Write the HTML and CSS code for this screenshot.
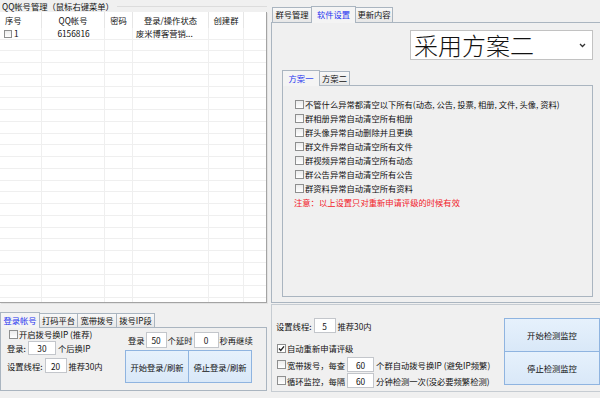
FILE: index.html
```html
<!DOCTYPE html>
<html lang="zh-CN">
<head>
    <meta charset="UTF-8">
    <title>QQ群管理</title>
    <link rel="stylesheet" href="styles.css">
</head>
<body>
<div class="app">
    <!-- 左侧：帐号列表 + 登录设置 -->
    <div class="left">
        <div class="group-title"><span>QQ帐号管理（鼠标右键菜单）</span></div>
        <div class="list">
            <div class="list-head">
                <div class="col first">序号</div>
                <div class="col">QQ帐号</div>
                <div class="col">密码</div>
                <div class="col">登录/操作状态</div>
                <div class="col">创建群</div>
                <div class="col last"></div>
            </div>
            <div class="list-body">
                <div class="row">
                    <div class="col first"><span class="cb small"></span>1</div>
                    <div class="col">6156816</div>
                    <div class="col"></div>
                    <div class="col lefty">废米博客营销...</div>
                    <div class="col"></div>
                    <div class="col"></div>
                </div>
            </div>
        </div>

        <div class="tabs bottom-tabs">
            <div class="tab on" style="width:40px">登录帐号</div>
            <div class="tab" style="width:39px">打码平台</div>
            <div class="tab" style="width:40px">宽带拨号</div>
            <div class="tab" style="width:39px">拨号IP段</div>
        </div>
        <div class="panel login-panel">
            <div class="login-left">
                <div class="line l1"><span class="cb"></span>开启拨号换IP (推荐)</div>
                <div class="line l2">登录:<span class="inp" style="width:28px">30</span>个后换IP</div>
                <div class="line l3">设置线程:<span class="inp" style="width:22px">20</span>推荐30内</div>
            </div>
            <div class="login-right">
                <div class="line delay">登录<span class="inp" style="width:21px">50</span>个延时<span class="inp" style="width:25px">0</span>秒再继续</div>
                <div class="btns">
                    <div class="btn">开始登录/刷新</div>
                    <div class="btn">停止登录/刷新</div>
                </div>
            </div>
        </div>
    </div>

    <!-- 右侧：软件设置 -->
    <div class="right">
        <div class="tabs top-tabs">
            <div class="tab" style="width:40px">群号管理</div>
            <div class="tab on" style="width:45px">软件设置</div>
            <div class="tab" style="width:38px">更新内容</div>
        </div>
        <div class="panel main-panel">
            <div class="select">
                <span>采用方案二</span>
                <svg width="7" height="5" viewBox="0 0 7 5"><path d="M1 1 L3.5 3.5 L6 1" fill="none" stroke="#333" stroke-width="1.3"/></svg>
            </div>
            <div class="tabs inner-tabs">
                <div class="tab on" style="width:38px">方案一</div>
                <div class="tab" style="width:31px">方案二</div>
            </div>
            <div class="panel inner-panel">
                <div class="opt"><span class="cb"></span>不管什么异常都清空以下所有(动态, 公告, 投票, 相册, 文件, 头像, 资料)</div>
                <div class="opt"><span class="cb"></span>群相册异常自动清空所有相册</div>
                <div class="opt"><span class="cb"></span>群头像异常自动删除并且更换</div>
                <div class="opt"><span class="cb"></span>群文件异常自动清空所有文件</div>
                <div class="opt"><span class="cb"></span>群视频异常自动清空所有动态</div>
                <div class="opt"><span class="cb"></span>群公告异常自动清空所有公告</div>
                <div class="opt"><span class="cb"></span>群资料异常自动清空所有资料</div>
                <div class="opt note">注意：以上设置只对重新申请评级的时候有效</div>
            </div>
        </div>
        <div class="panel monitor-panel">
            <div class="mon-left">
                <div class="line m1">设置线程:<span class="inp" style="width:22px">5</span>推荐30内</div>
                <div class="line m2"><span class="cb checked"><svg width="7" height="7" viewBox="0 0 7 7"><path d="M1 3.5 L2.8 5.5 L6 1.3" fill="none" stroke="#222" stroke-width="1.3"/></svg></span>自动重新申请评级</div>
                <div class="line m3"><span class="cb"></span>宽带拨号，每查<span class="inp" style="width:27px">60</span>个群自动拨号换IP (避免IP频繁)</div>
                <div class="line m4"><span class="cb"></span>循环监控，每隔<span class="inp" style="width:27px">60</span>分钟检测一次(没必要频繁检测)</div>
            </div>
            <div class="mon-right">
                <div class="btn big">开始检测监控</div>
                <div class="btn big">停止检测监控</div>
            </div>
        </div>
    </div>
</div>
</body>
</html>
```
FILE: styles.css
```css
* {
    box-sizing: border-box;
}

body {
    margin: 0;
    width: 600px;
    height: 398px;
    overflow: hidden;
    background-color: #f0f0f0;
    font-family: "Noto Sans CJK SC", "Noto Sans", sans-serif;
    font-size: 8.3px;
    line-height: 12px;
    color: #111;
}

.app {
    display: flex;
    height: 398px;
}

/* Linke Seite */
.left {
    width: 267px;
    display: flex;
    flex-direction: column;
}

.group-title {
    height: 12px;
    display: flex;
    align-items: center;
    padding-left: 2px;
}

.group-title::after {
    content: "";
    flex: 1;
    border-top: 1px solid #dcdcdc;
    margin-left: 3px;
}

.list {
    height: 291px;
    background: #fff;
    border-right: 1px solid #a3a3a3;
    border-bottom: 1px solid #a3a3a3;
    box-shadow: 1px 1px 0 #e2e2e2;
    display: flex;
    flex-direction: column;
}

.list-head,
.row {
    display: grid;
    grid-template-columns: 42px 63px 28px 76px 35px 1fr;
}

.list-head {
    height: 16px;
    line-height: 16px;
}

.list-head .col {
    border-right: 1px solid #e6e6e6;
    text-align: center;
}

.list-head .col.first {
    text-align: left;
    padding-left: 5px;
}

.list-head .col.last {
    border-right: none;
}

.list-body {
    flex: 1;
    background:
        linear-gradient(#efefef, #efefef) 41px 0 / 1px 100% no-repeat,
        linear-gradient(#efefef, #efefef) 104px 0 / 1px 100% no-repeat,
        linear-gradient(#efefef, #efefef) 132px 0 / 1px 100% no-repeat,
        linear-gradient(#efefef, #efefef) 208px 0 / 1px 100% no-repeat,
        linear-gradient(#efefef, #efefef) 243px 0 / 1px 100% no-repeat,
        repeating-linear-gradient(to bottom, transparent 0 10.75px, #efefef 10.75px 11.75px);
}

.row {
    height: 11.75px;
    line-height: 11.75px;
}

.row .col {
    text-align: center;
}

.row .col.first {
    text-align: left;
    padding-left: 4px;
    display: flex;
    align-items: center;
}

.row .col.lefty {
    text-align: left;
    padding-left: 3px;
}

/* Reiter */
.tabs {
    display: flex;
    align-items: flex-end;
}

.tab {
    height: 14px;
    line-height: 13px;
    text-align: center;
    white-space: nowrap;
    border: 1px solid #aab5c0;
    border-bottom: none;
    background: linear-gradient(#f8f8f8, #e7e7e7);
    margin-right: -1px;
}

.tab.on {
    height: 16px;
    line-height: 14px;
    background: #f4f4f4;
    color: #1f35f0;
    position: relative;
    z-index: 1;
    margin-bottom: -1px;
}

.panel {
    border: 1px solid #aab5c0;
}

.bottom-tabs {
    margin-top: 9px;
    height: 15px;
}

.login-panel {
    height: 64px;
    display: flex;
}

.line {
    display: flex;
    align-items: center;
    white-space: nowrap;
}

.cb {
    display: inline-block;
    width: 9px;
    height: 9px;
    border: 1px solid #8e8f8f;
    background: linear-gradient(#ececec, #fff);
    margin-right: 1px;
    flex: none;
}

.cb.small {
    width: 8px;
    height: 8px;
    margin-right: 2px;
}

.cb.checked {
    background: #fff;
    display: flex;
    align-items: center;
    justify-content: center;
}

.inp {
    display: inline-flex;
    align-items: center;
    justify-content: center;
    height: 100%;
    background: #fff;
    border: 1px solid #c3c6cb;
    margin: 0 2px;
}

.login-left {
    width: 124px;
    padding-left: 6px;
}

.l1 {
    height: 12px;
    padding-left: 2px;
}

.l2 {
    height: 14px;
    margin-top: 1px;
}

.l3 {
    height: 15px;
    margin-top: 3px;
}

.login-right {
    width: 128px;
}

.delay {
    height: 16px;
    margin-top: 4px;
    padding-left: 3px;
}

.delay .inp {
    margin: 0 1px;
}

.btns {
    display: flex;
    margin-top: 2px;
}

.btn {
    display: flex;
    align-items: center;
    justify-content: center;
    width: 64px;
    height: 33px;
    border: 1px solid #8fb4e0;
    background: linear-gradient(#e6f1fc, #d9e8f8);
}

.btns .btn + .btn {
    margin-left: -1px;
}

/* Rechte Seite */
.right {
    margin-left: 4px;
    width: 329px;
    display: flex;
    flex-direction: column;
}

.top-tabs {
    height: 22px;
    padding-left: 1px;
}

.top-tabs .tab {
    height: 15px;
}

.top-tabs .tab.on {
    height: 17px;
}

.main-panel {
    height: 281px;
    border-right: none;
    padding-top: 7px;
}

.select {
    margin-left: 138px;
    width: 183px;
    height: 30px;
    background: #fff;
    border: 1px solid #c2c2c2;
    display: flex;
    align-items: center;
    justify-content: space-between;
    padding: 0 6px 0 3px;
    font-size: 24px;
    font-weight: 300;
    line-height: 28px;
    color: #111;
}

.inner-tabs {
    margin: 10px 0 0 10px;
    height: 15px;
}

.inner-panel {
    margin-left: 10px;
    width: 311px;
    height: 212px;
    padding: 11px 0 0 12px;
}

.opt {
    height: 14px;
    display: flex;
    align-items: center;
    white-space: nowrap;
}

.opt.note {
    color: #f2202a;
    margin-left: -1px;
}

.monitor-panel {
    height: 88px;
    margin-top: 1px;
    border-right: none;
    border-color: #c6ccd2;
    display: flex;
}

.mon-left {
    flex: 1;
    padding-left: 4px;
}

.m1 {
    height: 15px;
    margin-top: 13px;
}

.m2 {
    height: 12px;
    margin-top: 9px;
    padding-left: 1px;
}

.m3 {
    height: 15px;
    margin-top: 3px;
    padding-left: 1px;
}

.m4 {
    height: 15px;
    margin-top: 1px;
    padding-left: 1px;
}

.mon-right {
    width: 96px;
    padding-top: 13px;
}

.btn.big {
    width: 96px;
    height: 34px;
}

.btn.big + .btn.big {
    margin-top: -1px;
}
```
